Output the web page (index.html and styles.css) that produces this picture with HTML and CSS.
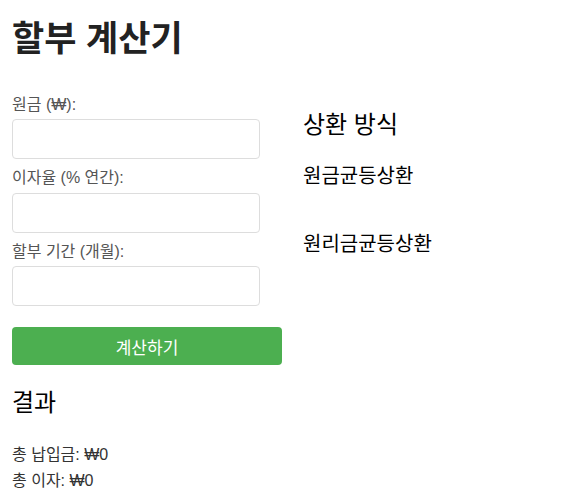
FILE: index.html
```html
<!DOCTYPE html>
<html lang="ko">
<head>
<meta charset="utf-8">
<title>할부 계산기</title>
<link rel="stylesheet" href="styles.css">
</head>
<body>
<h1 class="title">할부 계산기</h1>
<div class="layout">
  <div class="left">
    <form class="calc-form">
      <label class="field-label" for="principal">원금 (₩):</label>
      <input class="field-input" id="principal" type="text">
      <label class="field-label" for="rate">이자율 (% 연간):</label>
      <input class="field-input" id="rate" type="text">
      <label class="field-label" for="months">할부 기간 (개월):</label>
      <input class="field-input" id="months" type="text">
      <button class="calc-btn" type="button">계산하기</button>
    </form>
    <h2 class="result-title">결과</h2>
    <p class="result-line">총 납입금: ₩0</p>
    <p class="result-line">총 이자: ₩0</p>
  </div>
  <div class="right">
    <h3 class="method-title">상환 방식</h3>
    <div class="method-item">원금균등상환</div>
    <div class="method-item">원리금균등상환</div>
  </div>
</div>
</body>
</html>
```
FILE: styles.css
```css
html, body {
  margin: 0;
  padding: 0;
  background: #fff;
}
body {
  font-family: "Liberation Sans", Arial, "Noto Sans CJK KR", sans-serif;
  color: #333;
  padding: 0 12px;
}
.title {
  font-size: 35px;
  font-weight: bold;
  color: #222;
  margin: 20px 0 38px;
  line-height: 38px;
}
.layout {
  display: flex;
  align-items: flex-start;
}
.left {
  width: 270px;
}
.right {
  margin-left: 21px;
  padding-top: 15px;
}
.calc-form {
  display: flex;
  flex-direction: column;
  align-items: flex-start;
}
.field-label {
  font-size: 16px;
  color: #555;
  line-height: 18.4px;
  margin-bottom: 5px;
}
.field-input {
  box-sizing: border-box;
  width: 248px;
  height: 40px;
  border: 1px solid #ddd;
  border-radius: 4px;
  margin: 0 0 10px;
  padding: 8px;
  font-size: 14px;
}
.calc-btn {
  margin-top: 11px;
  width: 270px;
  height: 38px;
  border: none;
  border-radius: 4px;
  background: #4caf50;
  color: #fff;
  font-size: 17px;
  font-family: inherit;
}
.result-title {
  font-size: 24px;
  font-weight: normal;
  color: #000;
  margin: 24px 0 25px;
  line-height: 28px;
}
.result-line {
  font-size: 16px;
  color: #333;
  margin: 0;
  line-height: 26px;
}
.method-title {
  font-size: 24px;
  font-weight: normal;
  color: #000;
  margin: 0 0 26px;
  line-height: 28px;
}
.method-item {
  font-size: 20px;
  color: #000;
  line-height: 22px;
  margin-bottom: 46px;
}
```
